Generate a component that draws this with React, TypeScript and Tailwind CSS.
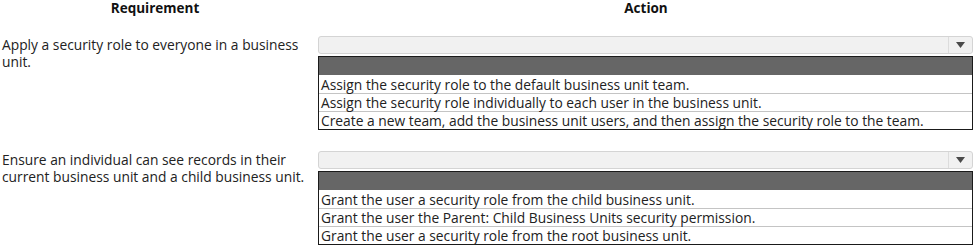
const sections = [
  {
    requirement: "Apply a security role to everyone in a business unit.",
    options: [
      "Assign the security role to the default business unit team.",
      "Assign the security role individually to each user in the business unit.",
      "Create a new team, add the business unit users, and then assign the security role to the team.",
    ],
  },
  {
    requirement: "Ensure an individual can see records in their current business unit and a child business unit.",
    options: [
      "Grant the user a security role from the child business unit.",
      "Grant the user the Parent: Child Business Units security permission.",
      "Grant the user a security role from the root business unit.",
    ],
  },
];

function Dropdown({ options }: { options: string[] }) {
  return (
    <div className="flex flex-col">
      <div className="flex h-[18px] rounded-[3px] border border-[#d4d4d4] bg-[#f1f1f1]">
        <div className="flex-1" />
        <div className="flex w-[24px] items-center justify-center border-l border-[#dcdcdc]">
          <svg width="9" height="6" viewBox="0 0 9 6">
            <path d="M0 0h9L4.5 6z" fill="#4a4a4a" />
          </svg>
        </div>
      </div>
      <div className="mt-[2px] border border-[#1a1a1a] bg-white">
        <div className="h-[18px] bg-[#666666]" />
        {options.map((opt, i) => (
          <div
            key={opt}
            className={`h-[18px] pl-[2px] text-[13.8px] leading-[17px] text-[#222] ${
              i > 0 ? "border-t border-[#c4c4c4]" : "pt-px"
            }`}
          >
            {opt}
          </div>
        ))}
      </div>
    </div>
  );
}

export default function App() {
  return (
    <div
      className="h-[251px] w-[974px] overflow-hidden bg-white text-[#222]"
      style={{ fontFamily: '"Open Sans", "Noto Sans", sans-serif' }}
    >
      <div className="flex h-[16px] text-[13.5px] font-bold leading-[16px] text-[#111]">
        <div className="w-[310px] text-center">Requirement</div>
        <div className="ml-[8px] flex-1 text-center">Action</div>
      </div>

      {sections.map((s, i) => (
        <div key={i} className={`flex ${i === 0 ? "mt-[20px]" : "mt-[21px]"}`}>
          <div className="w-[318px] pl-[2px] pr-[12px] text-[13.8px] leading-[17px]">{s.requirement}</div>
          <div className="w-[655px]">
            <Dropdown options={s.options} />
          </div>
        </div>
      ))}
    </div>
  );
}
